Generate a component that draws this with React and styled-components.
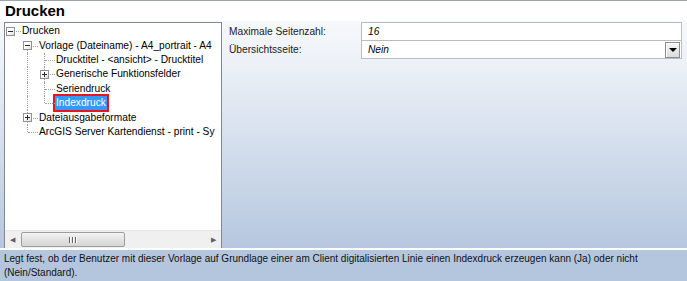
import React from 'react';
import styled, { createGlobalStyle } from 'styled-components';

const GlobalStyle = createGlobalStyle`
  html, body { margin: 0; padding: 0; }
  body {
    font-family: "Liberation Sans", Arial, sans-serif;
    font-size: 10.2px;
    color: #000;
    background: #fff;
  }
`;

const Window = styled.div`
  width: 687px;
  height: 281px;
  display: flex;
  flex-direction: column;
  overflow: hidden;
  background: #fff;
`;

const Header = styled.div`
  height: 20px;
  border-top: 1px solid #9ea3ab;
  background: #fff;
  font-size: 15px;
  font-weight: bold;
  line-height: 20px;
  padding-left: 5px;
`;

const Body = styled.div`
  height: 227px;
  box-sizing: border-box;
  display: flex;
  align-items: flex-start;
  gap: 3px;
  padding: 1px 5px 0 4px;
  background: linear-gradient(to bottom, #f6f8fb 0%, #eef2f8 16%, #b5c7df 100%);
`;

const TreePanel = styled.div`
  width: 218px;
  height: 226px;
  box-sizing: border-box;
  border: 1px solid #828790;
  border-bottom: none;
  background: #fff;
  display: flex;
  flex-direction: column;
`;

const TreeBody = styled.div`
  flex: 1;
  padding-top: 1px;
  overflow: hidden;
`;

const TreeRow = styled.div`
  display: flex;
  align-items: stretch;
  height: 14.4px;
  white-space: nowrap;
`;

const Gap = styled.div`
  flex: 0 0 17px;
`;

const Cell = styled.div`
  position: relative;
  flex: 0 0 17px;
  display: flex;
  align-items: center;

  &::before {
    content: '';
    display: ${p => (p.$up || p.$down ? 'block' : 'none')};
    position: absolute;
    left: 5px;
    top: ${p => (p.$up ? '0' : '50%')};
    bottom: ${p => (p.$down ? '0' : '50%')};
    border-left: 1px dotted #a0a0a0;
  }

  &::after {
    content: '';
    display: ${p => (p.$stub ? 'block' : 'none')};
    position: absolute;
    left: 6px;
    right: 1px;
    top: 50%;
    border-top: 1px dotted #a0a0a0;
  }
`;

const Expander = styled.div`
  position: relative;
  z-index: 1;
  margin-left: 1px;
  width: 9px;
  height: 9px;
  box-sizing: border-box;
  border: 1px solid #919191;
  background: linear-gradient(to bottom right, #fff 40%, #dcdcdc);

  &::before {
    content: '';
    position: absolute;
    left: 1px;
    right: 1px;
    top: 3px;
    height: 1px;
    background: #2b2b2b;
  }

  &::after {
    content: '';
    display: ${p => (p.$open ? 'none' : 'block')};
    position: absolute;
    top: 1px;
    bottom: 1px;
    left: 3px;
    width: 1px;
    background: #2b2b2b;
  }
`;

const Label = styled.span`
  align-self: center;
  line-height: 14px;
  color: ${p => (p.$selected ? '#fff' : '#000')};
  background: ${p => (p.$selected ? '#3399ff' : 'transparent')};
  border: ${p => (p.$selected ? '2px solid #e8141e' : 'none')};
  padding: ${p => (p.$selected ? '0 1px' : '0')};
  margin-left: ${p => (p.$selected ? '-3px' : '0')};
`;

const HScroll = styled.div`
  height: 17px;
  display: flex;
  align-items: stretch;
  background: #f0f0f0;
  border-top: 1px solid #e8e8e8;
`;

const ArrowBtn = styled.div`
  flex: 0 0 15px;
  display: flex;
  align-items: center;
  justify-content: center;
  color: #606060;
  font-size: 7px;
`;

const Track = styled.div`
  flex: 1;
  display: flex;
  align-items: center;
  padding: 0 1px;
`;

const Thumb = styled.div`
  width: 104px;
  height: 15px;
  box-sizing: border-box;
  border: 1px solid #9c9c9c;
  border-radius: 2px;
  background: linear-gradient(to bottom, #f4f4f4, #e2e2e2 50%, #d6d6d6);
  display: flex;
  align-items: center;
  justify-content: center;
  gap: 1px;
`;

const Grip = styled.span`
  width: 1px;
  height: 6px;
  background: #666;
  box-shadow: 1px 0 0 #fff;
  margin-right: 1px;
`;

const Grid = styled.div`
  flex: 1;
  display: flex;
  flex-direction: column;
`;

const PropRow = styled.div`
  display: flex;
  height: 19px;
  margin-top: ${p => (p.$first ? '0' : '-1px')};
`;

const PropName = styled.div`
  flex: 0 0 132px;
  padding-left: 4px;
  display: flex;
  align-items: center;
  color: #1a1a1a;
`;

const PropValue = styled.div`
  flex: 1;
  box-sizing: border-box;
  border: 1px solid #b9bcc1;
  background: #fff;
  display: flex;
  align-items: center;
  padding-left: 6px;
  font-style: italic;
`;

const DropButton = styled.div`
  margin-left: auto;
  margin-right: 1px;
  width: 15px;
  height: 16px;
  box-sizing: border-box;
  border: 1px solid #8c8c8c;
  background: linear-gradient(to bottom, #f7f7f7, #dcdcdc);
  box-shadow: inset 1px 1px 0 #fff;
  display: flex;
  align-items: center;
  justify-content: center;
`;

const Triangle = styled.span`
  width: 0;
  height: 0;
  border-left: 4px solid transparent;
  border-right: 4px solid transparent;
  border-top: 4px solid #000;
  margin-top: 1px;
`;

const Separator = styled.div`
  height: 2px;
  background: #fff;
`;

const Description = styled.div`
  flex: 1;
  background: #b4c6de;
  padding: 2px 2px 0 4px;
  font-size: 10px;
  line-height: 13.5px;
  color: #111;
`;

const rows = [
  { level: 0, text: 'Drucken', exp: 'open', stub: true },
  { level: 1, text: 'Vorlage (Dateiname) - A4_portrait - A4', exp: 'open', down: true, stub: true, guides: [] },
  { level: 2, text: 'Drucktitel - <ansicht> - Drucktitel', up: true, down: true, stub: true, guides: [true] },
  { level: 2, text: 'Generische Funktionsfelder', exp: 'closed', up: true, down: true, stub: true, guides: [true] },
  { level: 2, text: 'Seriendruck', up: true, down: true, stub: true, guides: [true] },
  { level: 2, text: 'Indexdruck', up: true, stub: true, selected: true, guides: [true] },
  { level: 1, text: 'Dateiausgabeformate', exp: 'closed', up: true, down: true, stub: true, guides: [] },
  { level: 1, text: 'ArcGIS Server Kartendienst - print - Sy', up: true, stub: true, guides: [] },
];

const GuideCell = ({ on }) => <Cell $up={on} $down={on} />;

const TreeItem = ({ row }) => (
  <TreeRow>
    {row.level > 0 && <Gap />}
    {(row.guides || []).map((g, i) => (
      <GuideCell key={i} on={g} />
    ))}
    <Cell $up={row.up} $down={row.down} $stub={row.stub}>
      {row.exp && <Expander $open={row.exp === 'open'} />}
    </Cell>
    <Label $selected={row.selected}>{row.text}</Label>
  </TreeRow>
);

export default function App() {
  return (
    <Window>
      <GlobalStyle />
      <Header>Drucken</Header>
      <Body>
        <TreePanel>
          <TreeBody>
            {rows.map((r, i) => (
              <TreeItem key={i} row={r} />
            ))}
          </TreeBody>
          <HScroll>
            <ArrowBtn>◀</ArrowBtn>
            <Track>
              <Thumb>
                <Grip />
                <Grip />
                <Grip />
              </Thumb>
            </Track>
            <ArrowBtn>▶</ArrowBtn>
          </HScroll>
        </TreePanel>
        <Grid>
          <PropRow $first>
            <PropName>Maximale Seitenzahl:</PropName>
            <PropValue>16</PropValue>
          </PropRow>
          <PropRow>
            <PropName>Übersichtsseite:</PropName>
            <PropValue>
              Nein
              <DropButton>
                <Triangle />
              </DropButton>
            </PropValue>
          </PropRow>
        </Grid>
      </Body>
      <Separator />
      <Description>
        Legt fest, ob der Benutzer mit dieser Vorlage auf Grundlage einer am Client digitalisierten Linie einen Indexdruck erzeugen kann (Ja) oder nicht (Nein/Standard).
      </Description>
    </Window>
  );
}
